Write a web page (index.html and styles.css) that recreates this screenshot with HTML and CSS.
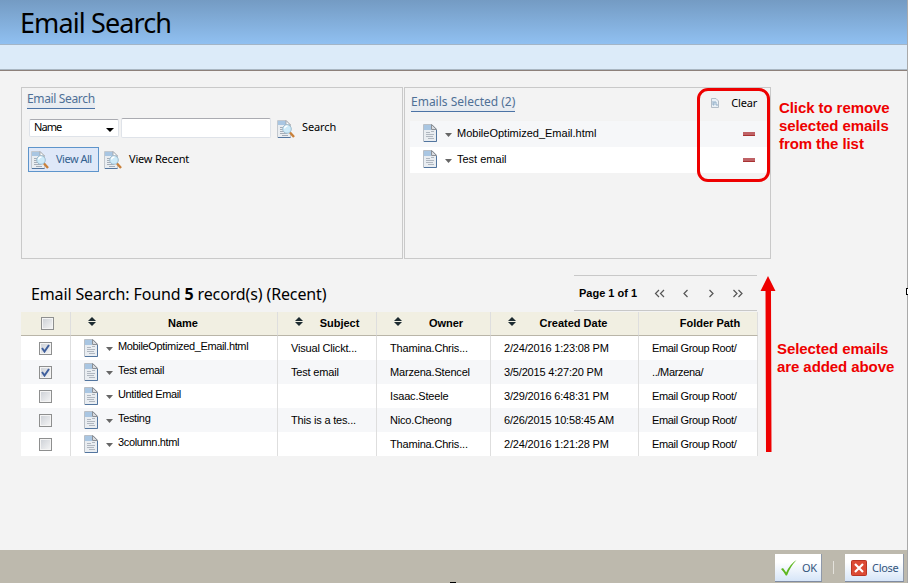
FILE: index.html
```html
<!DOCTYPE html>
<html lang="en">
<head>
    <meta charset="UTF-8">
    <title>Email Search</title>
    <link rel="stylesheet" href="styles.css">
</head>
<body>
    <svg width="0" height="0" class="defs">
        <symbol id="doc" viewBox="0 0 14 18">
            <path d="M.5 .5H9L13.500 5V17.500H.5z" fill="#e9edf1" stroke="#b9bfc6"/>
            <path d="M1 1h7v5H1z" fill="#a9c6e2"/>
            <path d="M8.500 .5V5.500H13.500z" fill="#d9dce0" stroke="#8b9097"/>
            <path d="M3 8.500h4M3 10.500h8M3 12.500h7M5 14.500h6M8 7.500h3" stroke="#b0b7c0"/>
            <path d="M13.500 6V17.500H1" fill="none" stroke="#52759f"/>
        </symbol>
        <symbol id="find" viewBox="0 0 18 18">
            <path d="M.5 .5H9L13.500 5V17.500H.5z" fill="#e9edf1" stroke="#c3c8ce"/>
            <path d="M1 1h8v4H1z" fill="#a9c6e2"/>
            <path d="M9 .5V5H13.500z" fill="#fff" stroke="#a5a9ae"/>
            <path d="M3 7.500h4M3 9.500h4M3 11.500h5M3 13.500h7M5 15.500h6" stroke="#a5adb7"/>
            <path d="M1 17.500H13.500" stroke="#52759f"/>
            <path d="M13 12.500L17 17" stroke="#c9803a" stroke-width="2.400"/>
            <circle cx="10" cy="9" r="4.300" fill="#cdeaf8" stroke="#9dbccf"/>
            <path d="M7.500 8.500a3 3 0 0 1 3-2.500" fill="none" stroke="#fff" stroke-width="1.300"/>
        </symbol>
        <symbol id="sort" viewBox="0 0 8 9">
            <path d="M4 0L8 4H0zM0 5H8L4 9z" fill="#1d2b30"/>
        </symbol>
    </svg>

    <header class="header"><h1>Email Search</h1></header>
    <div class="subbar"></div>

    <main class="main">
        <div class="panels">
            <section class="panel search">
                <h2 class="panel-title">Email Search</h2>
                <div class="search-row">
                    <div class="select">Name<span class="arrow"></span></div>
                    <input class="field" type="text">
                    <span class="tool"><svg class="find"><use href="#find"/></svg>Search</span>
                </div>
                <div class="view-row">
                    <span class="tool active"><svg class="find"><use href="#find"/></svg>View All</span>
                    <span class="tool recent"><svg class="find"><use href="#find"/></svg>View Recent</span>
                </div>
            </section>
            <section class="panel selected">
                <div class="selected-head">
                    <h2 class="panel-title">Emails Selected (2)</h2>
                    <span class="clear">
                        <svg width="8" height="10" viewBox="0 0 8 10"><path d="M.5 .5H5L7.500 3V9.500H.5z" fill="#e9f0f6" stroke="#b3bdc7"/><path d="M2 3v4h1V4h2v3h2" fill="none" stroke="#92afc8"/></svg>Clear
                    </span>
                </div>
                <div class="picked">
                    <svg class="doc"><use href="#doc"/></svg><span class="drop"></span>
                    <span class="picked-name">MobileOptimized_Email.html</span><span class="minus"></span>
                </div>
                <div class="picked white">
                    <svg class="doc"><use href="#doc"/></svg><span class="drop"></span>
                    <span class="picked-name">Test email</span><span class="minus"></span>
                </div>
            </section>
        </div>

        <div class="results-head">
            <div class="found">Email Search: Found <b>5</b> record(s) (Recent)</div>
            <div class="pager">
                <b>Page 1 of 1</b>
                <svg width="90" height="9" viewBox="0 0 90 9" fill="none" stroke="#555" stroke-width="1.200">
                    <path d="M5 1L1.500 4.500L5 8M10 1L6.500 4.500L10 8M33.500 1L30 4.500L33.500 8M55.500 1L59 4.500L55.500 8M79.500 1L83 4.500L79.500 8M84.500 1L88 4.500L84.500 8"/>
                </svg>
            </div>
        </div>

        <table class="results">
            <colgroup><col class="c1"><col class="c2"><col class="c3"><col class="c4"><col class="c5"><col class="c6"></colgroup>
            <thead>
                <tr>
                    <th class="check"><span class="box"></span></th>
                    <th><div class="th wide"><svg class="sort"><use href="#sort"/></svg><span>Name</span></div></th>
                    <th><div class="th"><svg class="sort"><use href="#sort"/></svg><span>Subject</span></div></th>
                    <th><div class="th"><svg class="sort"><use href="#sort"/></svg><span>Owner</span></div></th>
                    <th><div class="th wide"><svg class="sort"><use href="#sort"/></svg><span>Created Date</span></div></th>
                    <th><div class="th folder"><span>Folder Path</span></div></th>
                </tr>
            </thead>
            <tbody id="rows"></tbody>
        </table>
    </main>

    <footer class="footer">
        <button class="btn ok"><svg width="18" height="18" viewBox="0 0 18 18"><path d="M1 10L3 9L6.200 13.500Q10 5 16.500 1Q10 8 7 16.500H5.800Q4 13 1 10z" fill="#5fb721"/></svg>OK</button>
        <span class="sep"></span>
        <button class="btn close"><svg width="16" height="16" viewBox="0 0 16 16"><rect x=".5" y=".5" width="15" height="15" rx="1" fill="#dc4a34" stroke="#b93423"/><path d="M4 4L12 12M12 4L4 12" stroke="#fff" stroke-width="2.200"/></svg>Close</button>
    </footer>

    <!-- annotations -->
    <div class="callout"></div>
    <p class="note note-remove">Click to remove<br>selected emails<br>from the list</p>
    <svg class="up-arrow" width="16" height="177" viewBox="0 0 16 177"><path d="M8 0L15.500 15H11L11.500 176H6L5.500 15H.5z" fill="#ee0000"/></svg>
    <p class="note note-added">Selected emails<br>are added above</p>
    <div class="edge"></div>
    <div class="handle-right"></div>
    <div class="handle-bottom"></div>

    <script>
        const emails = [
            [true, 'MobileOptimized_Email.html', 'Visual Clickt...', 'Thamina.Chris...', '2/24/2016 1:23:08 PM', 'Email Group Root/'],
            [true, 'Test email', 'Test email', 'Marzena.Stencel', '3/5/2015 4:27:20 PM', '../Marzena/'],
            [false, 'Untitled Email', '', 'Isaac.Steele', '3/29/2016 6:48:31 PM', 'Email Group Root/'],
            [false, 'Testing', 'This is a tes...', 'Nico.Cheong', '6/26/2015 10:58:45 AM', 'Email Group Root/'],
            [false, '3column.html', '', 'Thamina.Chris...', '2/24/2016 1:21:28 PM', 'Email Group Root/']
        ];
        const tick = '<svg width="9" height="9" viewBox="0 0 9 9"><path d="M1 4L3.500 7.500L8 1" fill="none" stroke="#3f5f9c" stroke-width="2"/></svg>';

        document.getElementById('rows').innerHTML = emails.map(([checked, name, subject, owner, created, folder]) => `
            <tr>
                <td class="check"><span class="box">${checked ? tick : ''}</span></td>
                <td><div class="name-cell"><svg class="doc"><use href="#doc"/></svg><span class="drop"></span><span class="label">${name}</span></div></td>
                <td>${subject}</td>
                <td>${owner}</td>
                <td>${created}</td>
                <td class="path">${folder}</td>
            </tr>`).join('');
    </script>
</body>
</html>
```
FILE: styles.css
```css
* {
    box-sizing: border-box;
}
body {
    margin: 0;
    height: 583px;
    overflow: hidden;
    position: relative;
    display: flex;
    flex-direction: column;
    background: #f3f3f3;
    color: #000;
    font-family: "Liberation Sans", Arial, sans-serif;
    font-size: 11px;
}
svg {
    display: block;
    flex: none;
}
.defs {
    position: absolute;
}
.header {
    height: 45px;
    padding: 4px 0 0 20px;
    background: linear-gradient(#749bc3, #90c0f1);
    border-bottom: 1px solid #a3b5c7;
}
h1 {
    margin: 0;
    font: 27px/38px "Noto Sans", sans-serif;
    letter-spacing: -0.9px;
}
.subbar {
    height: 26px;
    background: #dcebf9;
    border-bottom: 1px solid #8d817b;
    box-shadow: inset 0 -1px #a9b6c2;
}
.main {
    flex: 1;
    padding: 16px 0 0 21px;
}
.panels {
    display: flex;
    gap: 1px;
}
.panel {
    height: 172px;
    border: 1px solid #c9c9c9;
}
.search {
    width: 382px;
    padding: 3px 5px;
}
.selected {
    width: 367px;
    padding: 6px 3px 0 5px;
}
.panel-title {
    display: inline-block;
    margin: 0;
    height: 18px;
    font: 12px/16px "Noto Sans", sans-serif;
    letter-spacing: -0.35px;
    color: #4f7096;
    border-bottom: 1px solid #4c73a5;
    background: linear-gradient(#f3f3f3, #e5eaf0);
}
.search-row {
    display: flex;
    margin: 9px 0 0 2px;
}
.select,
.field {
    border: 1px solid #dfe3e9;
    border-top-color: #aaabb1;
    border-radius: 2px;
    background: #fff;
}
.select {
    width: 90px;
    height: 18px;
    display: flex;
    justify-content: space-between;
    margin-top: 1px;
    padding: 0 4px;
    font: 11px/14px "Noto Sans", sans-serif;
    letter-spacing: -0.9px;
}
.arrow {
    margin-top: 8px;
    width: 8px;
    height: 4px;
    background: #000;
    clip-path: polygon(0 0, 100% 0, 50% 100%);
}
.field {
    width: 150px;
    height: 20px;
    margin-left: 2px;
}
.tool {
    display: flex;
    align-items: center;
    height: 25px;
    font: 11px/15px "Noto Sans", sans-serif;
    letter-spacing: -0.2px;
}
.find {
    width: 18px;
    height: 18px;
    margin-right: 7px;
}
.search-row .tool {
    margin-left: 6px;
    height: 17px;
    letter-spacing: -0.1px;
}
.search-row .find {
    margin-top: 4px;
}
.view-row {
    display: flex;
    margin: 9px 0 0 1px;
}
.view-row .find {
    margin-top: 3px;
}
.active {
    width: 71px;
    padding: 0 0 2px 2px;
    border: 1px solid #5d94cb;
    background: #dfe8f8;
    color: #33618f;
    letter-spacing: -0.5px;
}
.recent {
    margin-left: 5px;
    padding-bottom: 2px;
}
.selected-head {
    display: flex;
    justify-content: space-between;
    height: 27px;
    padding-left: 1px;
}
.selected-head .panel-title {
    letter-spacing: 0;
}
.clear {
    display: flex;
    align-items: center;
    gap: 12px;
    height: 17px;
    margin-right: 10px;
    font: 11px "Noto Sans", sans-serif;
    letter-spacing: -0.2px;
}
.picked {
    display: flex;
    height: 26px;
    padding: 3px 12px 0 13px;
    background: #f6f7f9;
}
.white {
    background: #fff;
}
.doc {
    width: 14px;
    height: 18px;
}
.drop {
    width: 7px;
    height: 4px;
    margin: 9px 5px 0 8px;
    background: #666;
    clip-path: polygon(0 0, 100% 0, 50% 100%);
}
.picked-name {
    margin-top: 3px;
    line-height: 12px;
}
.minus {
    width: 12px;
    height: 4px;
    margin: 8px 0 0 auto;
    background: #bf6266;
    border-bottom: 1px solid #a93232;
}
.results-head {
    display: flex;
    justify-content: space-between;
    width: 736px;
    height: 36px;
    margin-top: 16px;
    padding-left: 10px;
}
.found {
    padding-top: 9px;
    font: 16px/21px "Noto Sans", sans-serif;
    letter-spacing: -0.13px;
}
.pager {
    width: 183px;
    display: flex;
    align-items: center;
    gap: 17px;
    padding-left: 5px;
    border-top: 1px solid #c8c8c8;
    border-bottom: 1px solid #c8c8c8;
}
.results {
    width: 737px;
    margin-top: 1px;
    table-layout: fixed;
    border-collapse: separate;
    border-spacing: 0;
}
.c1 { width: 50px; }
.c2 { width: 207px; }
.c3 { width: 99px; }
.c4 { width: 114px; }
.c5 { width: 148px; }
.c6 { width: 119px; }
.results th,
.results td {
    height: 24px;
    padding: 0 0 0 13px;
    border-right: 1px solid #dedede;
    white-space: nowrap;
    line-height: 13px;
    letter-spacing: -0.18px;
    text-align: left;
}
.results th {
    padding: 0;
    background: #f1efe2;
    border-bottom: 1px solid #b9b5a8;
    letter-spacing: 0;
}
.results td {
    background: #fff;
}
.results tr:nth-child(even) td {
    background: #f6f7f9;
}
.results .path {
    letter-spacing: -0.35px;
}
.th {
    display: flex;
    padding-left: 17px;
}
.th span {
    flex: 1;
    text-align: center;
}
.wide {
    padding-right: 7px;
}
.sort {
    width: 8px;
    height: 9px;
}
.folder {
    padding-left: 24px;
}
.results .check {
    padding: 0 0 0 18px;
}
.results th.check {
    padding-left: 20px;
}
.box {
    display: flex;
    align-items: center;
    justify-content: center;
    width: 13px;
    height: 13px;
    border: 1px solid #8e8f8f;
    box-shadow: inset 0 0 0 1px #f4f4f4;
    background: linear-gradient(135deg, #cbcfd5, #f6f6f6);
}
.name-cell {
    display: flex;
    height: 18px;
}
.name-cell .drop {
    margin-top: 8px;
}
.name-cell .label {
    line-height: 12px;
    margin-top: 1px;
    letter-spacing: -0.35px;
}
.footer {
    height: 33px;
    display: flex;
    justify-content: flex-end;
    padding: 4px 4px 0 0;
    background: #bdb9ad;
}
.btn {
    display: flex;
    align-items: center;
    height: 28px;
    padding: 0 0 0 5px;
    border: 0;
    border-right: 1px solid #8f99aa;
    border-bottom: 1px solid #7f8ba1;
    background: linear-gradient(#fff 30%, #d6e5f8);
    color: #34557c;
    font: 11px "Noto Sans", sans-serif;
    letter-spacing: -0.3px;
}
.ok {
    width: 47px;
    gap: 4px;
}
.close {
    width: 59px;
    gap: 5px;
    padding-left: 6px;
}
.sep {
    width: 1px;
    height: 13px;
    margin: 7px 11px 0;
    background: #e4e2dc;
}
.callout {
    position: absolute;
    left: 697px;
    top: 88px;
    width: 73px;
    height: 94px;
    border: 3px solid #ee0000;
    border-radius: 11px;
}
.note {
    position: absolute;
    margin: 0;
    color: #ee0000;
    font-size: 15px;
    font-weight: bold;
    line-height: 18px;
    letter-spacing: -0.08px;
    white-space: nowrap;
}
.note-remove {
    left: 779px;
    top: 99px;
}
.note-added {
    left: 777px;
    top: 340px;
}
.up-arrow {
    position: absolute;
    left: 760px;
    top: 276px;
}
.edge {
    position: absolute;
    right: 0;
    top: 0;
    width: 1px;
    height: 583px;
    background: #a9a9a9;
}
.handle-right {
    position: absolute;
    left: 906px;
    top: 288px;
    width: 7px;
    height: 7px;
    border: 1px solid #000;
    background: #fff;
}
.handle-bottom {
    position: absolute;
    left: 450px;
    top: 582px;
    width: 6px;
    height: 1px;
    background: #000;
}
```
